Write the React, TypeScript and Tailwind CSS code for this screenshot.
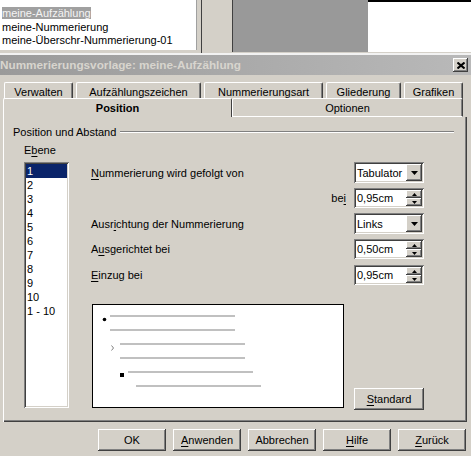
import React from "react";

// classic 3D bevels
const raised =
  "bg-[#d4d0c8] shadow-[inset_-1px_-1px_0_#404040,inset_1px_1px_0_#ffffff,inset_-2px_-2px_0_#808080,inset_2px_2px_0_#d4d0c8]";
const sunken =
  "shadow-[inset_1px_1px_0_#808080,inset_-1px_-1px_0_#ffffff,inset_2px_2px_0_#404040,inset_-2px_-2px_0_#d4d0c8]";

function Acc({ t, at, len = 1 }: { t: string; at: number; len?: number }) {
  return (
    <>
      {t.slice(0, at)}
      <span className="underline underline-offset-[2px]">{t.slice(at, at + len)}</span>
      {t.slice(at + len)}
    </>
  );
}

function DropArrow() {
  return (
    <svg width="7" height="4" viewBox="0 0 7 4">
      <path d="M0 0h7L3.5 4z" fill="#000" />
    </svg>
  );
}

function Select({ value }: { value: string }) {
  return (
    <div className={`w-[70px] h-[21px] bg-white ${sunken} flex items-center justify-between pl-[3px] pr-[2px]`}>
      <span>{value}</span>
      <div className={`w-[16px] h-[17px] ${raised} flex items-center justify-center`}>
        <DropArrow />
      </div>
    </div>
  );
}

function Spin({ value }: { value: string }) {
  return (
    <div className={`w-[70px] h-[20px] bg-white ${sunken} flex items-center justify-between pl-[3px] pr-[2px]`}>
      <span>{value}</span>
      <div className="flex flex-col w-[16px] h-[16px]">
        <div className={`h-[8px] ${raised} flex items-center justify-center`}>
          <svg width="5" height="3" viewBox="0 0 5 3">
            <path d="M2.5 0L5 3H0z" fill="#000" />
          </svg>
        </div>
        <div className={`h-[8px] ${raised} flex items-center justify-center`}>
          <svg width="5" height="3" viewBox="0 0 5 3">
            <path d="M0 0h5L2.5 3z" fill="#000" />
          </svg>
        </div>
      </div>
    </div>
  );
}

function Button({ children, className = "" }: { children: React.ReactNode; className?: string }) {
  return (
    <button type="button" className={`h-[22px] ${raised} flex items-center justify-center ${className}`}>
      {children}
    </button>
  );
}

const backTabs = [
  { label: "Verwalten", w: "w-[69px]" },
  { label: "Aufzählungszeichen", w: "w-[125px]" },
  { label: "Nummerierungsart", w: "w-[119px]" },
  { label: "Gliederung", w: "w-[75px]" },
  { label: "Grafiken", w: "w-[59px]" },
];

const levels = ["1", "2", "3", "4", "5", "6", "7", "8", "9", "10", "1 - 10"];

function Preview() {
  return (
    <div className="w-[252px] h-[104px] border border-black bg-white">
      <svg width="250" height="102" viewBox="0 0 250 102">
        <g fill="#c0c0c0">
          <rect x="17" y="10" width="125" height="2" />
          <rect x="17" y="24" width="125" height="2" />
          <rect x="27" y="38" width="125" height="2" />
          <rect x="27" y="52" width="125" height="2" />
          <rect x="35" y="66" width="125" height="2" />
          <rect x="43" y="80" width="125" height="2" />
        </g>
        <circle cx="11.5" cy="14.5" r="1.8" fill="#000" />
        <path d="M18.5 40.5l2 2.5-2 2.5" stroke="#808080" strokeWidth="1" fill="none" />
        <rect x="27" y="68" width="4" height="4" fill="#000" />
      </svg>
    </div>
  );
}

export default function App() {
  return (
    <div className="w-[471px] h-[456px] overflow-hidden bg-[#d4d0c8] text-black text-[11px] leading-[14px] font-['Liberation_Sans',Arial,sans-serif]">
      {/* window behind the dialog */}
      <div className="flex h-[53px]">
        <div className="w-[197px] h-[50px] bg-white border-r border-[#a0a0a0] pl-[2px] pt-[7px] leading-[13.5px]">
          <div>
            <span className="bg-[#a0a0a0] text-[#f4f4f4]">meine-Aufzählung</span>
          </div>
          <div>meine-Nummerierung</div>
          <div>meine-Überschr-Nummerierung-01</div>
        </div>
        <div className="w-[4px]" />
        <div className="w-px bg-[#404040]" />
        <div className="w-[30px]" />
        <div className="w-px h-[52px] bg-[#404040]" />
        <div className="w-[135px] h-[52px] bg-[#999999]" />
        <div className="flex-1 h-[52px] bg-white border-t-2 border-black" />
      </div>
      <div className="h-[2px] bg-[#f2f2f2]" />

      {/* title bar */}
      <div className="h-[20px] flex items-center justify-between bg-linear-to-r from-[#9a9a9a] to-[#b9b9b9]">
        <span className="font-bold text-[#d8d5ce] text-[11.75px]">
          Nummerierungsvorlage: meine-Aufzählung
        </span>
        <div className={`mr-[3px] w-[15px] h-[14px] ${raised} flex items-center justify-center`}>
          <svg width="8" height="7" viewBox="0 0 8 7">
            <path d="M0.5 0.5l7 6M7.5 0.5l-7 6" stroke="#000" strokeWidth="2" />
          </svg>
        </div>
      </div>

      <div className="pt-[7px]">
        {/* tabs */}
        <div className="flex gap-[3px] pl-[4px] h-[16px]">
          {backTabs.map((tab) => (
            <div
              key={tab.label}
              className={`${tab.w} h-[17px] border-t border-l border-white border-r border-r-[#404040] rounded-t-[2px] shadow-[inset_-1px_0_0_#808080] flex items-center justify-center pt-[1px]`}
            >
              {tab.label}
            </div>
          ))}
        </div>
        <div className="relative flex pl-[3px] h-[19px]">
          <div className="w-[229px] h-[19px] bg-[#d4d0c8] border-t border-l border-white border-r border-r-[#404040] rounded-t-[2px] flex items-center justify-center font-bold">
            Position
          </div>
          <div className="w-[231px] h-[19px] bg-[#d4d0c8] border-t border-l border-b border-white border-r border-r-[#404040] shadow-[inset_-1px_0_0_#808080] rounded-t-[2px] flex items-center justify-center">
            Optionen
          </div>
        </div>

        {/* tab page */}
        <div className="ml-[3px] w-[464px] h-[305px] pt-[8px] shadow-[inset_1px_0_0_#ffffff,inset_-1px_-1px_0_#404040,inset_-2px_-2px_0_#808080]">
          <div className="flex items-center h-[14px] pl-[10px] pr-[13px]">
            <span>Position und Abstand</span>
            <div className="flex-1 ml-[4px] h-[2px] border-t border-[#808080] border-b border-b-white" />
          </div>

          <div className="flex pl-[21px] mt-[4px]">
            <div className="w-[45px]">
              <div>
                <Acc t="Ebene" at={1} />
              </div>
              <div className={`mt-[5px] h-[246px] bg-white ${sunken} p-[2px]`}>
                {levels.map((lvl, i) => (
                  <div
                    key={lvl}
                    className={`h-[14px] pl-[1px] ${i === 0 ? "bg-[#0a246a] text-white" : ""}`}
                  >
                    {lvl}
                  </div>
                ))}
              </div>
            </div>

            <div className="ml-[22px] w-[333px]">
              <div className="mt-[19px] h-[21px] flex items-center justify-between">
                <span>
                  <Acc t="Nummerierung wird gefolgt von" at={0} />
                </span>
                <Select value="Tabulator" />
              </div>
              <div className="mt-[5px] h-[20px] flex items-center justify-end">
                <span className="mr-[8px]">
                  <Acc t="bei" at={2} />
                </span>
                <Spin value="0,95cm" />
              </div>
              <div className="mt-[5px] h-[21px] flex items-center justify-between">
                <span>
                  <Acc t="Ausrichtung der Nummerierung" at={4} />
                </span>
                <Select value="Links" />
              </div>
              <div className="mt-[5px] h-[20px] flex items-center justify-between">
                <span>
                  <Acc t="Ausgerichtet bei" at={1} />
                </span>
                <Spin value="0,50cm" />
              </div>
              <div className="mt-[6px] h-[20px] flex items-center justify-between">
                <span>
                  <Acc t="Einzug bei" at={0} />
                </span>
                <Spin value="0,95cm" />
              </div>

              <div className="mt-[19px] ml-[1px] flex items-start">
                <Preview />
                <Button className="ml-[10px] mt-[84px] w-[88px]">
                  <Acc t="Standard" at={0} />
                </Button>
              </div>
            </div>
          </div>
        </div>

        {/* dialog buttons */}
        <div className="flex gap-[7px] pl-[98px] mt-[7px]">
          <Button className="w-[68px]">OK</Button>
          <Button className="w-[68px]">
            <Acc t="Anwenden" at={0} />
          </Button>
          <Button className="w-[68px]">Abbrechen</Button>
          <Button className="w-[68px]">
            <Acc t="Hilfe" at={0} />
          </Button>
          <Button className="w-[68px]">
            <Acc t="Zurück" at={0} />
          </Button>
        </div>
      </div>
    </div>
  );
}
